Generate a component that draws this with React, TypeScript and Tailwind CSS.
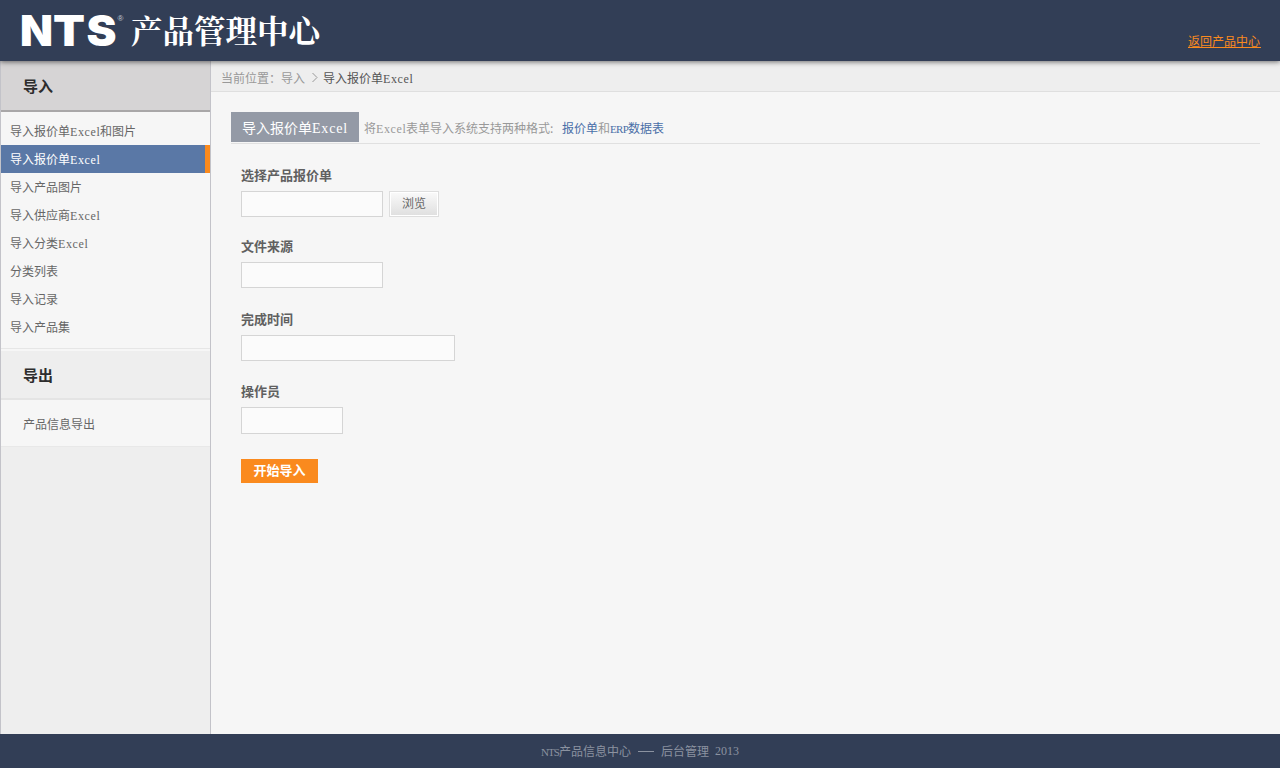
import type { ReactNode } from "react";

function En({ children, wide = false }: { children: ReactNode; wide?: boolean }) {
  return (
    <span
      className={
        wide
          ? "inline-block w-[36px] whitespace-nowrap font-['Liberation_Serif',serif] text-[14px] leading-none tracking-[0.8px]"
          : "inline-block w-[30px] whitespace-nowrap font-['Liberation_Serif',serif] text-[12px] leading-none tracking-[0.6px]"
      }
    >
      {children}
    </span>
  );
}

const importItems: { label: string; en?: string; tail?: string; active?: boolean }[] = [
  { label: "导入报价单", en: "Excel", tail: "和图片" },
  { label: "导入报价单", en: "Excel", active: true },
  { label: "导入产品图片" },
  { label: "导入供应商", en: "Excel" },
  { label: "导入分类", en: "Excel" },
  { label: "分类列表" },
  { label: "导入记录" },
  { label: "导入产品集" },
];

function Header() {
  return (
    <header className="relative z-10 flex h-[61px] shrink-0 justify-between bg-[#323e56] pl-[16px] pr-[19px] shadow-[0_1px_5px_rgba(0,0,0,0.55)]">
      <div className="flex">
        <svg width="112" height="61" viewBox="-6 0 112 61" className="shrink-0 overflow-visible">
          <g fill="#fff" fontFamily="Inter, 'Liberation Sans', sans-serif" fontWeight="900" fontSize="42">
            <text x="-2" y="46" textLength="33" lengthAdjust="spacingAndGlyphs">N</text>
            <text x="31" y="46" textLength="32" lengthAdjust="spacingAndGlyphs">T</text>
            <text x="64.5" y="46" textLength="30" lengthAdjust="spacingAndGlyphs">S</text>
          </g>
          <text x="95.5" y="21" fill="#c7ccd6" fontFamily="'Liberation Sans', sans-serif" fontSize="8">®</text>
        </svg>
        <h1 className="ml-[3px] mt-[7px] whitespace-nowrap font-['Noto_Serif_CJK_SC','Noto_Sans_CJK_SC',serif] text-[31.5px] font-bold leading-[46px] text-white">
          产品管理中心
        </h1>
      </div>
      <a href="#" className="mt-[31px] h-[17px] w-[73px] self-start whitespace-nowrap border-b border-[#fa8a1e] text-[12px] leading-[20px] text-[#fa8a1e]">
        返回产品中心
      </a>
    </header>
  );
}

function Sidebar() {
  return (
    <aside className="flex w-[211px] shrink-0 flex-col border-x border-[#c3c3c9] bg-[#eeeeee]">
      <h2 className="h-[51px] border-b-2 border-[#a9a7a8] bg-[#d6d4d5] pl-[22px] text-[15px] font-bold leading-[50px] text-[#2d2d2d]">
        导入
      </h2>
      <ul className="bg-[#f6f6f6] pb-[7px] pt-[5px]">
        {importItems.map((item) => (
          <li
            key={item.label + (item.en ?? "") + (item.tail ?? "")}
            className={
              item.active
                ? "h-7 border-r-[5px] border-[#fa8a1e] bg-[#5a78a6] pl-[9px] leading-7 text-white"
                : "h-7 pl-[9px] leading-7 text-[#666]"
            }
          >
            {item.label}
            {item.en && <En>{item.en}</En>}
            {item.tail}
          </li>
        ))}
      </ul>
      <div className="h-[3px] border-t border-[#e6e6e6] bg-[#f6f6f6]" />
      <h2 className="h-[49px] border-b-2 border-[#e4e4e4] bg-[#eeeeee] pl-[22px] text-[15px] font-bold leading-[47px] text-[#2d2d2d]">
        导出
      </h2>
      <ul className="h-[47px] border-b border-[#e8e8e8] bg-[#f6f6f6] pl-[22px] leading-[48px] text-[#666]">
        <li>产品信息导出</li>
      </ul>
    </aside>
  );
}

function Label({ children }: { children: ReactNode }) {
  return <label className="block h-[26px] text-[13px] font-bold leading-[20px] text-[#606060]">{children}</label>;
}

function Main() {
  return (
    <main className="flex-1 bg-[#f6f6f6]">
      <nav className="flex h-[31px] items-center border-b border-[#dfdfdf] bg-[#eeeeee] pl-[10px] pt-[3px] text-[#999]">
        <span className="w-[85px] whitespace-nowrap">当前位置：导入</span>
        <svg width="17" height="11" viewBox="0 0 17 11" fill="none" stroke="#999" className="shrink-0">
          <path d="M6.5 1 L11 5.5 L6.5 10" />
        </svg>
        <span className="text-[#555]">
          导入报价单<En>Excel</En>
        </span>
      </nav>
      <div className="pl-5 pr-[20px] pt-5">
        <div className="flex h-8 border-b border-[#e0e0e0] text-[#999]">
          <h3 className="h-[30px] w-[128px] whitespace-nowrap bg-[#949aa6] pl-[11px] text-[14px] leading-[30px] text-white">
            导入报价单<En wide>Excel</En>
          </h3>
          <p className="ml-[5px] whitespace-nowrap leading-[32px]">
            将<En>Excel</En>表单导入系统支持两种格式
            <span className="inline-block w-[12px]">:</span>
            <a href="#" className="text-[#4a6fa8]">报价单</a>和
            <a href="#" className="text-[#4a6fa8]">
              <span className="inline-block w-[18px] whitespace-nowrap font-['Liberation_Serif',serif] text-[11px] leading-none tracking-[-0.7px]">ERP</span>数据表
            </a>
          </p>
        </div>
        <form className="pl-[10px] pt-[21px]" onSubmit={(e) => e.preventDefault()}>
          <div className="h-[71px]">
            <Label>选择产品报价单</Label>
            <div className="flex">
              <input className="h-[26px] w-[142px] border border-[#d5d5d5] bg-[#fbfbfb] px-1 outline-none" />
              <button type="button" className="ml-[6px] h-[26px] w-[50px] border border-[#dedede] bg-linear-to-b from-[#fafafa] to-[#dfdfdf] pb-[3px] text-[12px] leading-[20px] text-[#666] shadow-[inset_0_0_0_1px_#ffffff]">
                浏览
              </button>
            </div>
          </div>
          <div className="h-[73px]">
            <Label>文件来源</Label>
            <input className="block h-[26px] w-[142px] border border-[#d5d5d5] bg-[#fbfbfb] px-1 outline-none" />
          </div>
          <div className="h-[72px]">
            <Label>完成时间</Label>
            <input className="block h-[26px] w-[214px] border border-[#d5d5d5] bg-[#fbfbfb] px-1 outline-none" />
          </div>
          <div className="h-[78px]">
            <Label>操作员</Label>
            <input className="block h-[27px] w-[102px] border border-[#d5d5d5] bg-[#fbfbfb] px-1 outline-none" />
          </div>
          <button type="submit" className="block h-6 w-[77px] bg-[#fa8a1e] pb-[3px] text-[13px] font-bold leading-[20px] text-white">
            开始导入
          </button>
        </form>
      </div>
    </main>
  );
}

export default function App() {
  return (
    <div className="flex h-[768px] w-[1280px] flex-col overflow-hidden bg-[#f6f6f6] font-['Noto_Sans_CJK_SC',sans-serif] text-[12px]">
      <Header />
      <div className="flex flex-1">
        <Sidebar />
        <Main />
      </div>
      <footer className="flex h-[34px] shrink-0 items-center whitespace-nowrap bg-[#323e56] pl-[541px] text-[#8b92a0]">
        <span className="inline-block w-[18px] pt-[2px] font-['Liberation_Serif',serif] text-[11px] tracking-[-0.9px]">NTS</span>
        <span className="w-[72px]">产品信息中心</span>
        <span className="mx-[7px] h-px w-4 bg-[#8b92a0]" />
        <span className="w-[54px]">后台管理</span>
        <span className="font-['Liberation_Serif',serif] text-[12px]">2013</span>
      </footer>
    </div>
  );
}
